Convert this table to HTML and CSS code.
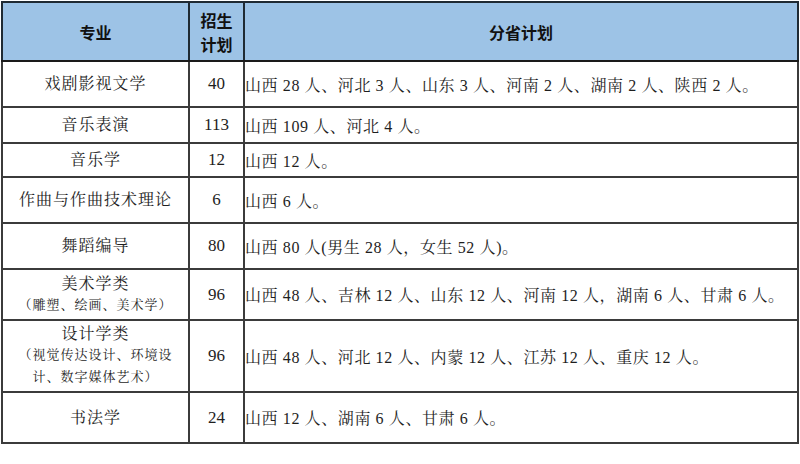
FILE: index.html
```html
<!DOCTYPE html>
<html lang="zh">
<head>
<meta charset="utf-8">
<link rel="stylesheet" href="styles.css">
</head>
<body>
<table class="plan">
  <colgroup>
    <col class="c-major">
    <col class="c-num">
    <col class="c-prov">
  </colgroup>
  <thead>
    <tr class="r-head">
      <th>专业</th>
      <th class="th-num">招生<br>计划</th>
      <th>分省计划</th>
    </tr>
  </thead>
  <tbody>
    <tr class="r1">
      <td class="major">戏剧影视文学</td>
      <td class="num">40</td>
      <td class="prov">山西 28 人、河北 3 人、山东 3 人、河南 2 人、湖南 2 人、陕西 2 人。</td>
    </tr>
    <tr class="r2">
      <td class="major">音乐表演</td>
      <td class="num">113</td>
      <td class="prov">山西 109 人、河北 4 人。</td>
    </tr>
    <tr class="r3">
      <td class="major">音乐学</td>
      <td class="num">12</td>
      <td class="prov">山西 12 人。</td>
    </tr>
    <tr class="r4">
      <td class="major">作曲与作曲技术理论</td>
      <td class="num">6</td>
      <td class="prov">山西 6 人。</td>
    </tr>
    <tr class="r5">
      <td class="major">舞蹈编导</td>
      <td class="num">80</td>
      <td class="prov">山西 80 人(男生 28 人，女生 52 人)。</td>
    </tr>
    <tr class="r6">
      <td class="major">美术学类<br><span class="sub">（雕塑、绘画、美术学）</span></td>
      <td class="num">96</td>
      <td class="prov">山西 48 人、吉林 12 人、山东 12 人、河南 12 人，湖南 6 人、甘肃 6 人。</td>
    </tr>
    <tr class="r7">
      <td class="major">设计学类<br><span class="sub">（视觉传达设计、环境设<br>计、数字媒体艺术）</span></td>
      <td class="num">96</td>
      <td class="prov">山西 48 人、河北 12 人、内蒙 12 人、江苏 12 人、重庆 12 人。</td>
    </tr>
    <tr class="r8">
      <td class="major">书法学</td>
      <td class="num">24</td>
      <td class="prov">山西 12 人、湖南 6 人、甘肃 6 人。</td>
    </tr>
  </tbody>
</table>
</body>
</html>
```
FILE: styles.css
```css
html, body {
  margin: 0;
  padding: 0;
  background: #ffffff;
}

.plan {
  border-collapse: collapse;
  table-layout: fixed;
  width: 798px;
  margin: 1px 0 0 1px;
  font-family: "Liberation Serif", "Noto Serif CJK SC", "Noto Sans CJK SC", serif;
  color: #1e1e1e;
  font-size: 16px;
}

.c-major { width: 187px; }
.c-num { width: 55px; }
.c-prov { width: auto; }

.plan th,
.plan td {
  border: 2px solid #3b3b3b;
  padding: 0;
  vertical-align: middle;
}

.plan thead th {
  background: #9dc3e6;
  font-family: "Noto Sans CJK SC", sans-serif;
  font-weight: 700;
  font-size: 16px;
  text-align: center;
  color: #111;
  border-color: #1f2a33;
  border-bottom-color: #1a1a1a;
}

.th-num {
  line-height: 24px;
  font-size: 17px;
}

.r-head { height: 59px; }
.r1 { height: 46px; }
.r2 { height: 36px; }
.r3 { height: 34px; }
.r4 { height: 46px; }
.r5 { height: 46px; }
.r6 { height: 51px; }
.r7 { height: 72px; }
.r8 { height: 51px; }

.major {
  text-align: center;
  letter-spacing: 1px;
  line-height: 20px;
}

.sub {
  font-size: 13px;
  line-height: 22px;
}

.num {
  text-align: center;
  font-size: 17px;
}

.prov {
  text-align: left;
  padding-left: 3px;
  letter-spacing: 0.6px;
  white-space: nowrap;
}
```
